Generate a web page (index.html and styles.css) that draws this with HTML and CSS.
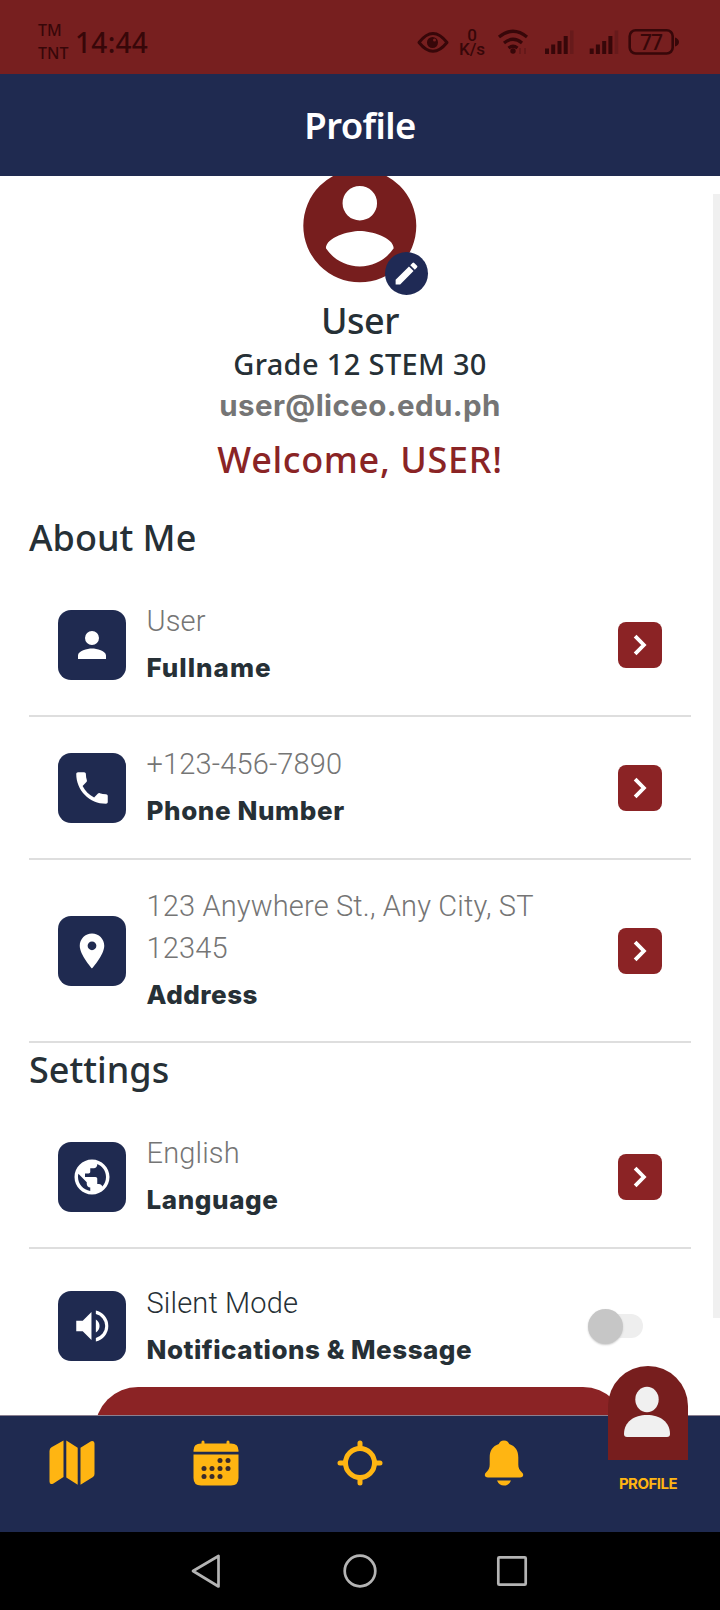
FILE: index.html
```
<!DOCTYPE html>
<html lang="en">
<head>
<meta charset="utf-8">
<title>Profile</title>
<link rel="stylesheet" href="styles.css">
</head>
<body>
<div class="screen">
  <div class="statusbar">
    <div class="carriers"><span>TM</span><span>TNT</span></div>
    <span class="clock">14:44</span>
    <svg class="status-icons" width="270" height="40" viewBox="410 20 270 40">
      <path d="M419 42.500Q433 24.500 447 42.500Q433 60 419 42.500Z" fill="none" stroke="currentColor" stroke-width="3" stroke-linejoin="round"/>
      <circle cx="432.500" cy="42.500" r="5.500"/><circle cx="434.500" cy="40" r="1.500" fill="#771f1f"/>
      <g fill="none" stroke="currentColor" stroke-width="3.200"><path d="M499 37Q513 25.500 527 37M504 43Q513 35.500 522 43M508.500 48Q513 44.500 517.500 48"/></g>
      <circle cx="513" cy="51" r="2.700"/>
      <path d="M520 48v6m5-6v6" stroke="#66191a" stroke-width="2"/>
      <g id="bars"><path d="M545 48.500h4v5.500h-4zM551.200 44.500h4v9.500h-4zM557.500 41h4v13h-4zM563.700 36h4v18h-4z"/><path d="M570 30.500h3.500v23.500H570z" fill="#671a1b"/></g>
      <use href="#bars" x="44.700"/>
      <rect x="629.700" y="30.200" width="43" height="23.300" rx="6" fill="none" stroke="currentColor" stroke-width="2.600"/>
      <path d="M675 37.500q4 1.500 4 4.500t-4 4.500z"/>
    </svg>
    <div class="speed"><span>0</span><span>K/s</span></div>
    <span class="battery">77</span>
  </div>

  <header class="header"><h1>Profile</h1></header>

  <main class="content">
    <section class="identity">
      <div class="avatar">
        <svg width="135.600" height="135.600" viewBox="0 0 24 24"><path fill="#771e1e" fill-rule="evenodd" d="M12 2a10 10 0 1 0 0 20 10 10 0 0 0 0-20zm0 2.950a3.050 3.050 0 1 1 0 6.100 3.050 3.050 0 0 1 0-6.100zM12 19.200c-2.500 0-4.710-1.280-6-3.220.03-1.990 4-3.080 6-3.080 1.990 0 5.970 1.090 6 3.080-1.290 1.940-3.500 3.220-6 3.220z"/></svg>
        <span class="edit"><svg width="29" height="29" viewBox="0 0 24 24" fill="#fff"><path d="M3 17.250V21h3.750L17.810 9.940l-3.750-3.750L3 17.250zM20.710 7.040a1 1 0 0 0 0-1.410l-2.340-2.340a1 1 0 0 0-1.410 0l-1.830 1.830 3.750 3.750 1.830-1.830z"/></svg></span>
      </div>
      <p class="name">User</p>
      <p class="grade">Grade 12 STEM 30</p>
      <p class="email">user@liceo.edu.ph</p>
      <p class="welcome">Welcome, USER!</p>
    </section>

    <h2 class="section-title">About Me</h2>
    <div class="row">
      <span class="tile"><svg width="42" height="42" viewBox="0 0 24 24"><path d="M12 12a4 4 0 1 0 0-8 4 4 0 0 0 0 8zm0 2c-2.670 0-8 1.340-8 4v2h16v-2c0-2.660-5.330-4-8-4z"/></svg></span>
      <div class="info"><p class="value">User</p><p class="label wide">Fullname</p></div>
      <span class="go"><svg width="42" height="42" viewBox="0 0 24 24"><path d="M9.200 6.900 14.200 12l-5 5.100"/></svg></span>
    </div>
    <div class="row">
      <span class="tile"><svg width="42" height="42" viewBox="0 0 24 24"><path d="M6.620 10.790c1.440 2.830 3.760 5.140 6.590 6.590l2.200-2.200c.27-.27.67-.36 1.020-.24 1.120.37 2.330.57 3.570.57.55 0 1 .45 1 1V20c0 .55-.45 1-1 1C10.610 21 3 13.390 3 4c0-.55.45-1 1-1h3.500c.55 0 1 .45 1 1 0 1.250.2 2.450.57 3.570.11.35.03.74-.25 1.020l-2.200 2.200z"/></svg></span>
      <div class="info"><p class="value">+123-456-7890</p><p class="label">Phone Number</p></div>
      <span class="go"><svg width="42" height="42" viewBox="0 0 24 24"><path d="M9.200 6.900 14.200 12l-5 5.100"/></svg></span>
    </div>
    <div class="row row-tall">
      <span class="tile"><svg width="42" height="42" viewBox="0 0 24 24"><path d="M12 2C8.130 2 5 5.130 5 9c0 5.250 7 13 7 13s7-7.750 7-13c0-3.870-3.130-7-7-7zm0 9.500a2.500 2.500 0 1 1 0-5 2.500 2.500 0 0 1 0 5z"/></svg></span>
      <div class="info"><p class="value">123 Anywhere St., Any City, ST<br>12345</p><p class="label snug">Address</p></div>
      <span class="go"><svg width="42" height="42" viewBox="0 0 24 24"><path d="M9.200 6.900 14.200 12l-5 5.100"/></svg></span>
    </div>

    <h2 class="section-title second">Settings</h2>
    <div class="row">
      <span class="tile"><svg width="42" height="42" viewBox="0 0 24 24"><path d="M12 2C6.480 2 2 6.480 2 12s4.480 10 10 10 10-4.480 10-10S17.520 2 12 2zm-1 17.930c-3.950-.49-7-3.850-7-7.930 0-.62.08-1.210.21-1.790L9 15v1c0 1.100.9 2 2 2v1.930zm6.900-2.540c-.26-.81-1-1.390-1.900-1.390h-1v-3c0-.55-.45-1-1-1H8v-2h2c.55 0 1-.45 1-1V7h2c1.100 0 2-.9 2-2v-.41c2.930 1.190 5 4.060 5 7.410 0 2.080-.8 3.970-2.100 5.390z"/></svg></span>
      <div class="info"><p class="value">English</p><p class="label">Language</p></div>
      <span class="go"><svg width="42" height="42" viewBox="0 0 24 24"><path d="M9.200 6.900 14.200 12l-5 5.100"/></svg></span>
    </div>
    <div class="row row-last">
      <span class="tile"><svg width="42" height="42" viewBox="0 0 24 24"><path d="M3 9v6h3.700l5 5V4l-5 5zM14.200 8.300a4.300 4.300 0 0 1 0 7.400zM14.200 3.200v2a7 7 0 0 1 0 13.600v2a9 9 0 0 0 0-17.600z"/></svg></span>
      <div class="info"><p class="value dark">Silent Mode</p><p class="label snug">Notifications &amp; Message</p></div>
      <span class="switch"></span>
    </div>
    <div class="action"></div>
    <div class="scrollbar"></div>
  </main>

  <nav class="tabs">
    <span class="tab"><svg width="48" height="48" viewBox="0 0 48 48"><path d="M1.500 12Q1.500 9.500 3.500 8.200L15.500 1.500V38L5 44.700Q1.500 46 1.500 42.500zM18.300 1.500 29.700 8.800V45.700L18.300 38.500zM32.500 8.800 43 2.200Q46.500 1 46.500 4.500V35Q46.500 37 45 38L32.500 45.700z"/></svg></span>
    <span class="tab"><svg width="48" height="48" viewBox="0 0 48 48"><path d="M9.500 4.500V3q0-1.500 1.500-1.500T12.500 3v1.500h22V3q0-1.500 1.500-1.500T37.500 3v1.500h1.500q7.500 0 7.500 7v1.300h-45v-1.300q0-7 7.500-7zM1.500 15.500h45V39q0 7.500-7.500 7.500H9Q1.500 46.500 1.500 39z"/><g fill="#3a2b2b"><circle cx="28" cy="21.500" r="2.500"/><circle cx="36" cy="21.500" r="2.500"/><circle cx="12" cy="29.500" r="2.500"/><circle cx="20" cy="29.500" r="2.500"/><circle cx="28" cy="29.500" r="2.500"/><circle cx="36" cy="29.500" r="2.500"/><circle cx="12" cy="37.500" r="2.500"/><circle cx="20" cy="37.500" r="2.500"/><circle cx="28" cy="37.500" r="2.500"/></g></svg></span>
    <span class="tab"><svg width="48" height="48" viewBox="0 0 48 48"><g fill="none" stroke="#ffb512" stroke-width="5" stroke-linecap="round"><circle cx="24" cy="24" r="14.500"/><path d="M24 4v5M24 39v5M4 24h5M39 24h5"/></g></svg></span>
    <span class="tab"><svg width="48" height="48" viewBox="0 0 48 48"><path d="M24 1.500c-3 0-4.500 1.500-5.200 3.600C12.500 7.200 9.700 12 9.700 18.500v7c0 3.500-1 5.500-3.500 7.700-2.500 2.300-1.500 5.300 1.800 5.300h32c3.300 0 4.300-3 1.800-5.300-2.500-2.200-3.500-4.200-3.500-7.700v-7c0-6.500-2.800-11.300-9.100-13.400C28.500 3 27 1.500 24 1.500zM17 41.500h14q-2 5-7 5t-7-5z"/></svg></span>
    <span class="tab active">
      <span class="bubble"><svg width="80" height="94" viewBox="0 0 80 94"><ellipse cx="39" cy="33.500" rx="11.700" ry="12.700"/><path d="M16 68C16 56 26 49 39 49s23 7 23 19q0 3-3 3H19q-3 0-3-3z"/></svg></span>
      <span class="tab-label">PROFILE</span>
    </span>
  </nav>

  <div class="sysnav">
    <svg width="720" height="78" viewBox="0 1532 720 78" fill="none" stroke="#b4b4b4" stroke-width="2.700" stroke-linejoin="round"><path d="M193 1571 218.500 1556v30.500z"/><circle cx="360" cy="1571" r="15.300"/><rect x="498.300" y="1557.300" width="27.400" height="27.400" rx="1"/></svg>
  </div>
</div>
</body>
</html>
```
FILE: styles.css
```
* { box-sizing: border-box; }
body { margin: 0; background: #fff; font-family: "Noto Sans", sans-serif; color: #263036; }
h1, h2, p { margin: 0; font-weight: 500; }
svg { display: block; flex: none; }
.screen { width: 720px; height: 1610px; display: flex; flex-direction: column; overflow: hidden; }

.statusbar { position: relative; height: 74px; flex: none; background: #771f1f; color: #370709; display: flex; align-items: flex-start; padding: 19px 40px 0 38px; font-weight: 500; }
.carriers { display: flex; flex-direction: column; font-size: 16px; line-height: 22.5px; width: 37px; }
.clock { font-size: 28px; line-height: 46px; letter-spacing: .3px; }
.status-icons { position: absolute; left: 410px; top: 20px; fill: currentColor; }
.speed { position: absolute; left: 455px; top: 28px; width: 34px; display: flex; flex-direction: column; align-items: center; font: 500 17px/14px Roboto, sans-serif; }
.battery { position: absolute; left: 630px; top: 29px; width: 42px; text-align: center; font-size: 21px; line-height: 26px; letter-spacing: -1px; }

.header { height: 102px; flex: none; background: #1f2a50; color: #fff; display: flex; align-items: center; justify-content: center; }
.header h1 { font-size: 36.5px; font-weight: 600; line-height: 50px; letter-spacing: -.6px; }

.content { position: relative; height: 1239px; flex: none; overflow: hidden; padding: 0 29px; }
.identity { display: flex; flex-direction: column; align-items: center; margin-top: -18px; }
.avatar { position: relative; height: 137px; }
.edit { position: absolute; left: 93px; top: 94px; width: 43px; height: 43px; border-radius: 50%; background: #1f2a55; display: flex; align-items: center; justify-content: center; }
.name { font-size: 36px; line-height: 51px; letter-spacing: -.5px; }
.grade { font-size: 29px; line-height: 36px; height: 37px; letter-spacing: .35px; }
.email { font: 700 29.5px/41px Inter, sans-serif; height: 42px; color: #757575; margin-top: 2px; letter-spacing: .4px; }
.welcome { font-size: 36px; line-height: 65px; height: 64px; letter-spacing: .65px; color: #8a2425; }
.section-title { font-size: 36px; line-height: 50px; margin-top: 22px; margin-bottom: 11px; }
.section-title.second { margin-top: 2px; }

.row { height: 143px; display: flex; align-items: center; padding: 0 29px; border-bottom: 2px solid #dedede; }
.row-tall { height: 183px; }
.row-last { border-bottom: 0; height: 138px; padding-top: 16px; }
.tile { width: 68px; height: 70px; border-radius: 13px; background: #1f2a50; fill: #fff; display: flex; align-items: center; justify-content: center; flex: none; }
.info { margin-left: 20.5px; padding-top: 4px; flex: 1; white-space: nowrap; }
.value { font: 300 29px/42px Roboto, sans-serif; letter-spacing: .15px; color: #757575; }
.value.dark { color: #263036; }
.label { font: 800 26px/51px Inter, sans-serif; letter-spacing: .6px; }
.label.snug { letter-spacing: .5px; }
.label.wide { letter-spacing: 1px; }
.go { width: 44px; height: 46px; border-radius: 8px; background: #8b2325; display: flex; align-items: center; justify-content: center; fill: none; stroke: #fff; stroke-width: 2.2px; }
.switch { position: relative; width: 38px; height: 24px; margin-right: 19px; border-radius: 12px; background: #eee; }
.switch::before { content: ""; position: absolute; left: -17px; top: -5px; width: 35px; height: 35px; border-radius: 50%; background: #c6c6c6; box-shadow: 0 1px 2px #ccc; }
.action { width: 531px; height: 90px; margin: 0 auto; border-radius: 43px; background: #8b2325; }
.scrollbar { position: absolute; right: 0; top: 18px; width: 7px; height: 1124px; background: #f0f0f0; }

.tabs { height: 117px; flex: none; display: flex; background: #1f2a50; border-top: 1px solid #8a8090; fill: #ffb512; position: relative; }
.tab { flex: 1; display: flex; flex-direction: column; align-items: center; padding-top: 23px; }
.active { padding-top: 0; margin-top: -50px; }
.bubble { width: 80px; height: 94px; background: #771e1e; border-radius: 40px 40px 0 0; fill: #f0f0f0; }
.tab-label { font: 700 15px/20px Inter, sans-serif; letter-spacing: -.5px; color: #ffb512; margin-top: 14px; }
.sysnav { height: 78px; background: #000; }
```
